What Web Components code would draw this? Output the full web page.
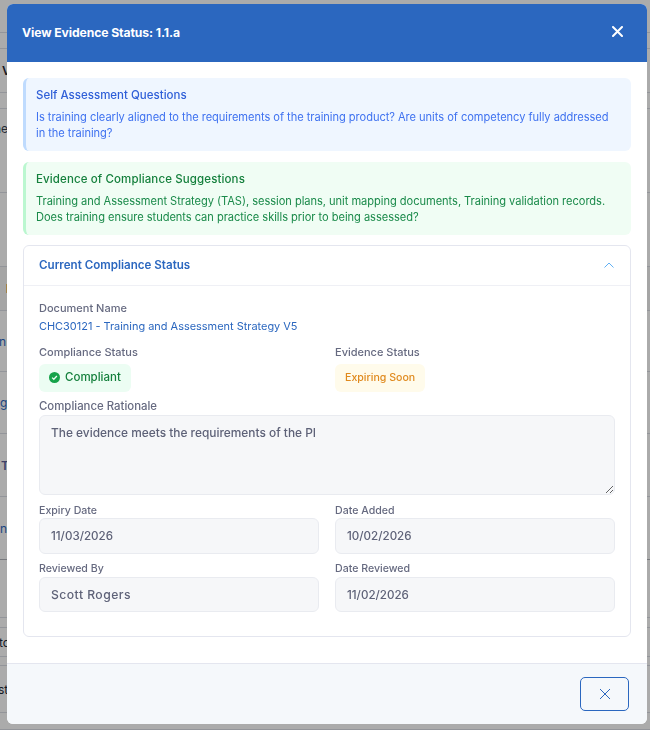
<!DOCTYPE html>
<html>
<head>
<meta charset="utf-8">
<title>View Evidence Status</title>
<style>
    html, body { margin: 0; height: 100%; overflow: hidden; background: #fff; }
    body { font-family: "Inter", "Liberation Sans", sans-serif; }
    ev-field.doc { --label-size: 11px; }
    ev-row.status { --label-size: 11px; --label-gap: 5px; margin-top: 10px; }
    ev-field.rationale { --label-size: 11.4px; margin-top: 7px; }
    ev-row.dates { --label-size: 10.6px; --label-gap: 0px; margin-top: 9px; }
    ev-row.people { --label-size: 10.6px; --label-gap: 1px; --box-height: 35px; margin-top: 8px; }
</style>
</head>
<body>
<ev-page></ev-page>
<ev-overlay>
    <ev-modal heading="View Evidence Status: 1.1.a">
        <ev-alert tone="blue" heading="Self Assessment Questions">Is training clearly aligned to the requirements of the training product? Are units of competency fully addressed in the training?</ev-alert>
        <ev-alert tone="green" heading="Evidence of Compliance Suggestions">Training and Assessment Strategy (TAS), session plans, unit mapping documents, Training validation records. Does training ensure students can practice skills prior to being assessed?</ev-alert>
        <ev-card heading="Current Compliance Status">
            <ev-field label="Document Name" class="doc"><ev-link>CHC30121 - Training and Assessment Strategy V5</ev-link></ev-field>
            <ev-row class="status">
                <ev-field label="Compliance Status"><ev-badge tone="green" check>Compliant</ev-badge></ev-field>
                <ev-field label="Evidence Status"><ev-badge tone="amber">Expiring Soon</ev-badge></ev-field>
            </ev-row>
            <ev-field label="Compliance Rationale" class="rationale"><ev-box multiline>The evidence meets the requirements of the PI</ev-box></ev-field>
            <ev-row class="dates">
                <ev-field label="Expiry Date"><ev-box>11/03/2026</ev-box></ev-field>
                <ev-field label="Date Added"><ev-box>10/02/2026</ev-box></ev-field>
            </ev-row>
            <ev-row class="people">
                <ev-field label="Reviewed By"><ev-box style="font-size:12.2px;letter-spacing:.45px">Scott Rogers</ev-box></ev-field>
                <ev-field label="Date Reviewed"><ev-box>11/02/2026</ev-box></ev-field>
            </ev-row>
        </ev-card>
    </ev-modal>
</ev-overlay>

<script>
// page behind the dialog: only the table rows and a few cut off words show
const pageRows = [
    { h: 33 }, { h: 16 },
    { h: 44, text: 'V', color: '#1f2937', weight: 600, x: 2 },
    { h: 16 },
    { h: 84, text: 'ne', color: '#374151', x: -6, up: 44 },
    { h: 74 },
    { h: 44, text: 'I', color: '#c2410c', x: 6, weight: 700, dark: true },
    { h: 61, text: 'in', color: '#2b67bf', x: -4 },
    { h: 62, text: 'g', color: '#2b67bf', x: 0 },
    { h: 63, text: 'T', color: '#5a5f9a', x: 1, weight: 600 },
    { h: 63, text: 'n', color: '#2b67bf', x: 0, strong: true },
    { h: 58 }, { h: 10 },
    { h: 29, text: 'tc', color: '#1f2937', x: -1 },
    { h: 9 },
    { h: 47, text: 'st', color: '#1f2937', x: -2 },
    { h: 17 }
];

class EvPage extends HTMLElement {
    connectedCallback() {
        this.attachShadow({ mode: 'open' });
        this.shadowRoot.innerHTML = `
            <style>
                :host { display: block; height: 730px; overflow: hidden; font-size: 12px; }
                .row {
                    box-sizing: border-box;
                    display: flex;
                    align-items: center;
                    border-bottom: 1px solid #dcdfe6;
                    overflow: hidden;
                    white-space: nowrap;
                }
                .row.strong { border-bottom-color: #b4b7bd; }
                .row.dark { background: #f6f6f6; }
            </style>
            ${pageRows.map(r => `
                <div class="row ${r.dark ? 'dark' : ''} ${r.strong ? 'strong' : ''}" style="height:${r.h}px;padding-bottom:${r.up || 0}px">
                    ${r.text ? `<span style="margin-left:${r.x}px;color:${r.color};font-weight:${r.weight || 400}">${r.text}</span>` : ''}
                </div>
            `).join('')}
        `;
    }
}

class EvOverlay extends HTMLElement {
    connectedCallback() {
        this.attachShadow({ mode: 'open' });
        this.shadowRoot.innerHTML = `
            <style>
                :host {
                    position: fixed;
                    inset: 0;
                    background: rgba(0, 0, 0, 0.33);
                    display: flex;
                    justify-content: flex-start;
                    align-items: flex-start;
                    padding: 4px 0 0 7px;
                    box-sizing: border-box;
                }
            </style>
            <slot></slot>
        `;
    }
}

class EvModal extends HTMLElement {
    connectedCallback() {
        this.attachShadow({ mode: 'open' });
        this.shadowRoot.innerHTML = `
            <style>
                :host {
                    display: flex;
                    flex-direction: column;
                    width: 640px;
                    height: 720px;
                    background: #fff;
                    border-radius: 6px;
                    overflow: hidden;
                }
                header {
                    flex: none;
                    box-sizing: border-box;
                    height: 58px;
                    background: #2b67bf;
                    display: flex;
                    align-items: center;
                    justify-content: space-between;
                    padding: 0 24px 2px 15px;
                    color: #fff;
                }
                header svg { margin-top: -1px; }
                h2 { margin: 0; font-size: 12.2px; font-weight: 700; letter-spacing: -0.1px; }
                main {
                    flex: 1;
                    padding: 16px 16px 0;
                    display: flex;
                    flex-direction: column;
                    gap: 11px;
                }
                footer {
                    flex: none;
                    box-sizing: border-box;
                    height: 61px;
                    border-top: 1px solid #e4e6ef;
                    background: #f5f8fb;
                    display: flex;
                    align-items: center;
                    justify-content: flex-end;
                    padding: 0 18px 0 0;
                }
                button {
                    width: 49px;
                    height: 34px;
                    padding: 0;
                    border: 1.3px solid #2b67bf;
                    border-radius: 5px;
                    background: transparent;
                    display: flex;
                    align-items: center;
                    justify-content: center;
                }
                svg { display: block; }
            </style>
            <header>
                <h2>${this.getAttribute('heading')}</h2>
                <svg width="11" height="11" viewBox="0 0 11 11" fill="none" stroke="#fff" stroke-width="2" stroke-linecap="round"><path d="M1 1l9 9M10 1l-9 9"/></svg>
            </header>
            <main><slot></slot></main>
            <footer>
                <button aria-label="Close">
                    <svg width="12" height="12" viewBox="0 0 12 12" fill="none" stroke="#2b67bf" stroke-width="1"><path d="M1 1l10 10M11 1L1 11"/></svg>
                </button>
            </footer>
        `;
    }
}

class EvAlert extends HTMLElement {
    connectedCallback() {
        const green = this.getAttribute('tone') === 'green';
        this.attachShadow({ mode: 'open' });
        this.shadowRoot.innerHTML = `
            <style>
                :host {
                    display: block;
                    box-sizing: border-box;
                    height: 73px;
                    padding: 9px 13px 0 10px;
                    border-left: 3px solid ${green ? '#bbf7d0' : '#bfdbfe'};
                    border-radius: 6px;
                    background: ${green ? '#f0fdf4' : '#eff6ff'};
                }
                h4 {
                    margin: 0 0 7px;
                    font-size: 11.5px;
                    line-height: 16px;
                    font-weight: 500;
                    letter-spacing: ${green ? '0.12px' : '0'};
                    color: ${green ? '#15803d' : '#2f5fd8'};
                }
                p {
                    margin: 0;
                    font-size: 11.1px;
                    line-height: 15.5px;
                    letter-spacing: -0.04px;
                    color: ${green ? '#1a8a4a' : '#3f72f0'};
                }
            </style>
            <h4>${this.getAttribute('heading')}</h4>
            <p><slot></slot></p>
        `;
    }
}

class EvCard extends HTMLElement {
    connectedCallback() {
        this.attachShadow({ mode: 'open' });
        this.shadowRoot.innerHTML = `
            <style>
                :host {
                    display: block;
                    box-sizing: border-box;
                    height: 392px;
                    margin-top: -1px;
                    border: 1px solid #e4e6ef;
                    border-radius: 6px;
                }
                header {
                    box-sizing: border-box;
                    height: 40px;
                    border-bottom: 1px solid #eff0f5;
                    display: flex;
                    align-items: center;
                    justify-content: space-between;
                    padding: 0 16px 1px 15px;
                }
                h3 { margin: 0; font-size: 11.6px; font-weight: 600; color: #2b67bf; }
                .body {
                    padding: 15px 15px 0;
                    display: flex;
                    flex-direction: column;
                }
            </style>
            <header>
                <h3>${this.getAttribute('heading')}</h3>
                <svg width="10" height="6" viewBox="0 0 10 6" fill="none" stroke="#60b0f4" stroke-width="1"><path d="M0.5 5.5L5 1l4.5 4.5"/></svg>
            </header>
            <div class="body"><slot></slot></div>
        `;
    }
}

class EvRow extends HTMLElement {
    connectedCallback() {
        this.attachShadow({ mode: 'open' });
        this.shadowRoot.innerHTML = `
            <style>
                :host { display: grid; grid-template-columns: 280px 280px; column-gap: 16px; }
            </style>
            <slot></slot>
        `;
    }
}

class EvField extends HTMLElement {
    connectedCallback() {
        this.attachShadow({ mode: 'open' });
        this.shadowRoot.innerHTML = `
            <style>
                :host { display: block; }
                label {
                    display: block;
                    font-size: var(--label-size, 10.6px);
                    font-weight: 500;
                    line-height: 14px;
                    color: #666a80;
                    margin-bottom: var(--label-gap, 2px);
                }
            </style>
            <label>${this.getAttribute('label')}</label>
            <slot></slot>
        `;
    }
}

class EvLink extends HTMLElement {
    connectedCallback() {
        this.attachShadow({ mode: 'open' });
        this.shadowRoot.innerHTML = `
            <style>
                :host { display: block; font-size: 10.95px; line-height: 18px; color: #2b67bf; }
            </style>
            <slot></slot>
        `;
    }
}

class EvBadge extends HTMLElement {
    connectedCallback() {
        const green = this.getAttribute('tone') === 'green';
        this.attachShadow({ mode: 'open' });
        this.shadowRoot.innerHTML = `
            <style>
                :host {
                    display: inline-flex;
                    align-items: center;
                    gap: 5px;
                    box-sizing: border-box;
                    height: 28px;
                    padding: 0 10px 2px;
                    border-radius: 6px;
                    font-size: ${green ? '11.5px' : '10.6px'};
                    font-weight: 500;
                    background: ${green ? '#ecfdf3' : '#fffbeb'};
                    color: ${green ? '#15803d' : '#e08a1e'};
                    vertical-align: top;
                }
                svg { display: block; }
            </style>
            ${this.hasAttribute('check') ? `
                <svg width="11" height="11" viewBox="0 0 11 11"><circle cx="5.5" cy="5.5" r="5.5" fill="#16a34a"/><path d="M3.1 5.6l1.7 1.7 3.1-3.3" fill="none" stroke="#ecfdf3" stroke-width="1.3"/></svg>
            ` : ''}
            <slot></slot>
        `;
    }
}

class EvBox extends HTMLElement {
    connectedCallback() {
        const multi = this.hasAttribute('multiline');
        this.attachShadow({ mode: 'open' });
        this.shadowRoot.innerHTML = `
            <style>
                :host {
                    display: flex;
                    align-items: ${multi ? 'flex-start' : 'center'};
                    box-sizing: border-box;
                    height: ${multi ? '80px' : 'var(--box-height, 36px)'};
                    padding: ${multi ? '9px' : '0'} 11px 0;
                    background: #f6f7f9;
                    border: 1px solid #e9ebf0;
                    border-radius: 6px;
                    font-size: ${multi ? '11.9px' : '11.6px'};
                    font-weight: 500;
                    line-height: 16px;
                    color: #5e6278;
                    ${multi ? 'resize: vertical; overflow: auto;' : ''}
                }
            </style>
            <slot></slot>
        `;
    }
}

customElements.define('ev-page', EvPage);
customElements.define('ev-overlay', EvOverlay);
customElements.define('ev-modal', EvModal);
customElements.define('ev-alert', EvAlert);
customElements.define('ev-card', EvCard);
customElements.define('ev-row', EvRow);
customElements.define('ev-field', EvField);
customElements.define('ev-link', EvLink);
customElements.define('ev-badge', EvBadge);
customElements.define('ev-box', EvBox);
</script>
</body>
</html>
